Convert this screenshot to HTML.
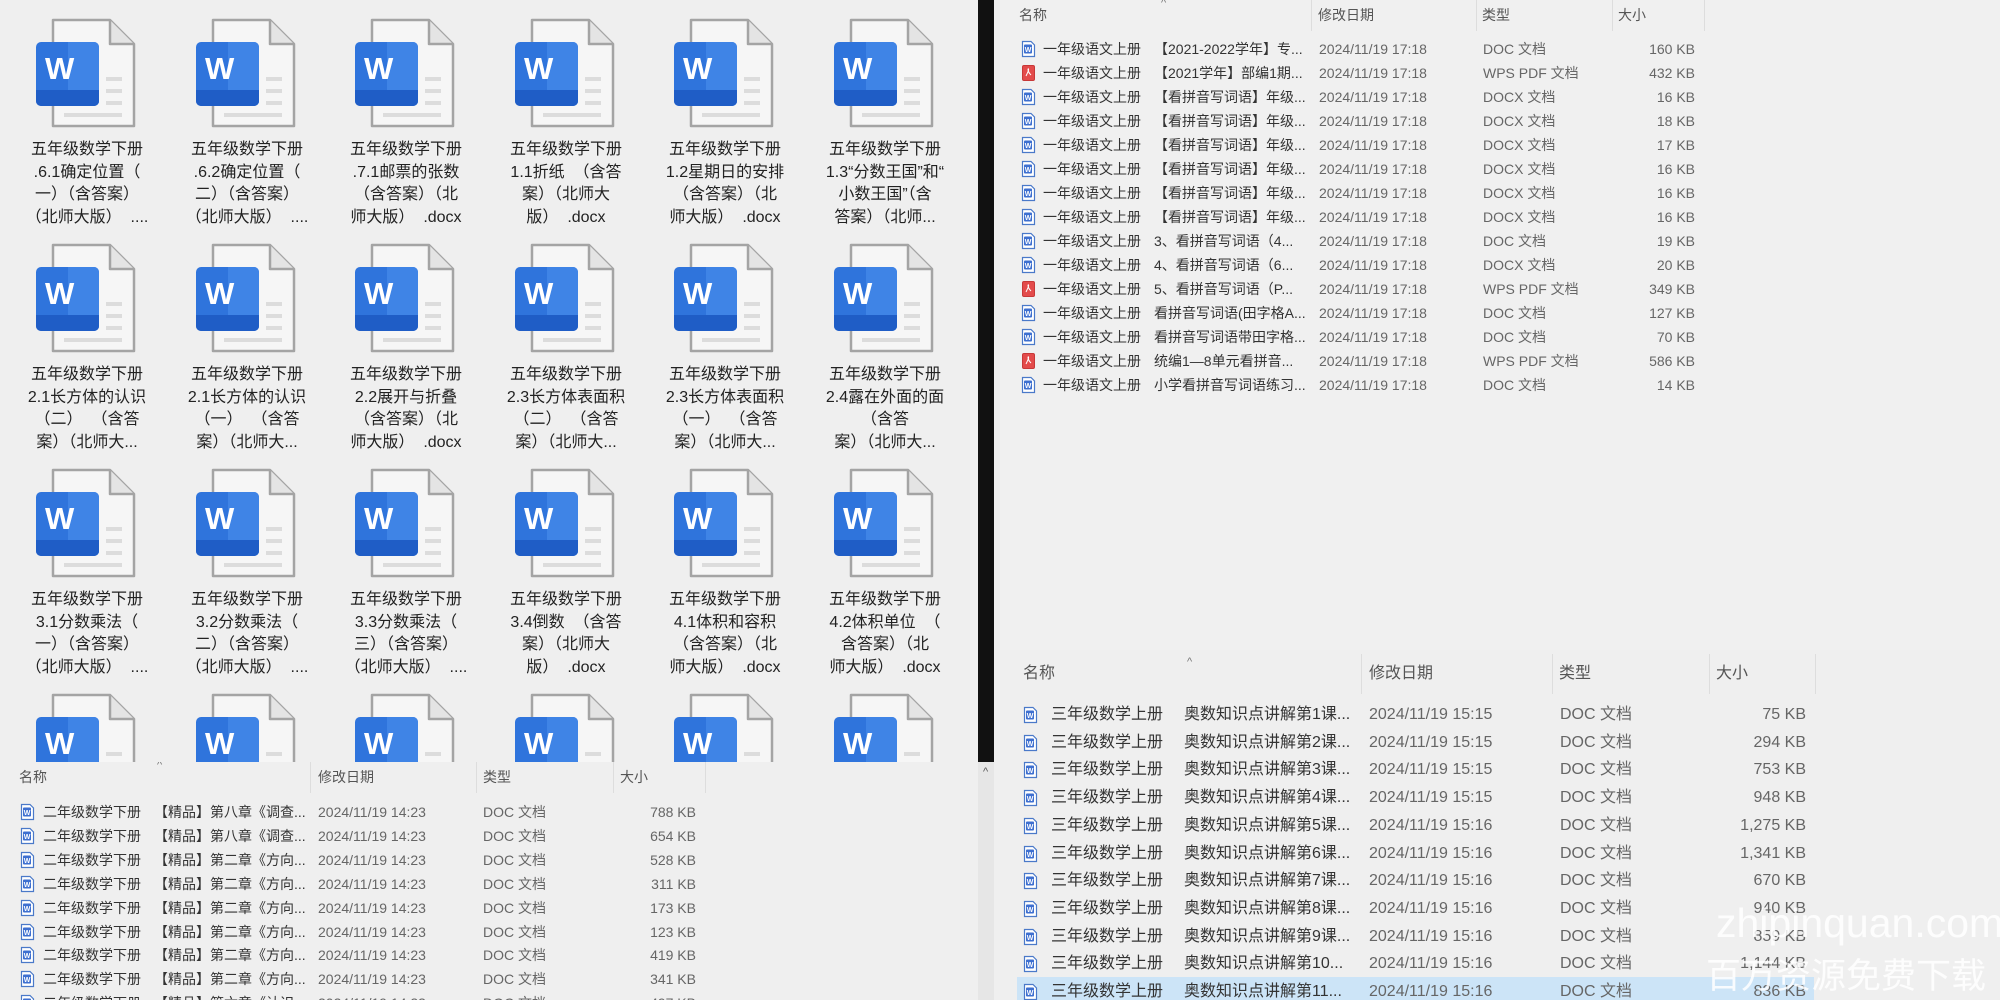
<!DOCTYPE html>
<html><head><meta charset="utf-8"><style>
*{margin:0;padding:0;box-sizing:border-box}
body{width:2000px;height:1000px;overflow:hidden;background:#efefef;font-family:"Liberation Sans","Noto Sans CJK SC",sans-serif;position:relative}
.a{position:absolute}
.it{position:absolute;width:160px;height:225px}
.pg{position:absolute;left:50px;top:18px;width:86px;height:111px}
.bw{position:absolute;left:36px;top:42px;width:63px;height:64px;border-radius:5px;overflow:hidden;background:#2f74dc}
.bw .r{position:absolute;left:32px;top:0;width:31px;height:64px;background:#3f84e6}
.bw .b{position:absolute;left:0;top:48px;width:63px;height:16px;background:#1f5dc6}
.bw span{position:absolute;left:9px;top:9px;color:#fff;font:bold 31px "Liberation Sans",sans-serif}
.tx{position:absolute;left:17px;top:139px;width:140px;text-align:center;font-size:16px;line-height:22.7px;color:#222;white-space:pre}
.h{position:absolute;font-size:14px;color:#555;line-height:20px}
.sep{position:absolute;width:1px;background:#ddd}
.row{position:absolute;font-size:14px;color:#333;white-space:nowrap;line-height:18px}
.row span{position:absolute;top:0;line-height:18px}
.g{color:#666}
.wm{position:absolute;color:rgba(255,255,255,.85);white-space:nowrap}
</style></head><body>

<div class="a" style="left:0;top:0;width:978px;height:762px;background:#efefef;overflow:hidden" id="grid"></div>

<div class="a" style="left:978px;top:0;width:16px;height:762px;background:#111"></div>
<div class="a" style="left:978px;top:762px;width:22px;height:238px;background:#e6e6e6"></div>
<div class="a" style="left:983px;top:766px;font-size:11px;color:#555">^</div>
<div class="a" style="left:994px;top:0;width:6px;height:762px;background:#efefef"></div>

<div class="a" style="left:0;top:762px;width:978px;height:238px;background:#efefef;overflow:hidden" id="bl"></div>
<div class="a" style="left:994px;top:0;width:1006px;height:650px;background:#f0f0f0;overflow:hidden" id="tr"></div>
<div class="a" style="left:994px;top:650px;width:1006px;height:350px;background:#efefef;overflow:hidden" id="br"></div>

<div class="wm" style="left:1716px;top:900px;font-size:41px;font-family:'Liberation Sans',sans-serif">zhipinquan.com</div>
<div class="wm" style="left:1706px;top:948px;font-size:35px">百万资源免费下载</div>

<script>
function icon(){return '<svg class="pg" viewBox="0 0 86 111"><path d="M3 2H60L84 26V108H3Z" fill="#f6f6f6" stroke="#a4a4a4" stroke-width="2.5" stroke-linejoin="round"/><path d="M60 2V26H84" fill="#e4e4e4" stroke="#a4a4a4" stroke-width="2.5" stroke-linejoin="round"/><g stroke="#dcdcdc" stroke-width="4"><line x1="56" y1="61" x2="72" y2="61"/><line x1="56" y1="73" x2="72" y2="73"/><line x1="56" y1="85" x2="72" y2="85"/><line x1="14" y1="97" x2="72" y2="97"/></g></svg><div class="bw"><div class="r"></div><div class="b"></div><span>W</span></div>';}
var T=[
["五年级数学下册\n.6.1确定位置（\n一）（含答案）\n（北师大版）  ....","五年级数学下册\n.6.2确定位置（\n二）（含答案）\n（北师大版）  ....","五年级数学下册\n.7.1邮票的张数\n（含答案）（北\n师大版）  .docx","五年级数学下册\n1.1折纸  （含答\n案）（北师大\n版）  .docx","五年级数学下册\n1.2星期日的安排\n（含答案）（北\n师大版）  .docx","五年级数学下册\n1.3“分数王国”和“\n小数王国”（含\n答案）（北师..."],
["五年级数学下册\n2.1长方体的认识\n（二）  （含答\n案）（北师大...","五年级数学下册\n2.1长方体的认识\n（一）  （含答\n案）（北师大...","五年级数学下册\n2.2展开与折叠\n（含答案）（北\n师大版）  .docx","五年级数学下册\n2.3长方体表面积\n（二）  （含答\n案）（北师大...","五年级数学下册\n2.3长方体表面积\n（一）  （含答\n案）（北师大...","五年级数学下册\n2.4露在外面的面\n（含答\n案）（北师大..."],
["五年级数学下册\n3.1分数乘法（\n一）（含答案）\n（北师大版）  ....","五年级数学下册\n3.2分数乘法（\n二）（含答案）\n（北师大版）  ....","五年级数学下册\n3.3分数乘法（\n三）（含答案）\n（北师大版）  ....","五年级数学下册\n3.4倒数  （含答\n案）（北师大\n版）  .docx","五年级数学下册\n4.1体积和容积\n（含答案）（北\n师大版）  .docx","五年级数学下册\n4.2体积单位  （\n含答案）（北\n师大版）  .docx"],
["","","","","",""]];
var h='';
for(var r=0;r<4;r++)for(var c=0;c<6;c++){h+='<div class="it" style="left:'+(Math.round(159.5*c))+'px;top:'+(r*225)+'px">'+icon()+'<div class="tx">'+T[r][c]+'</div></div>';}
document.getElementById('grid').innerHTML=h;

function di(){return '<svg width="15" height="18" viewBox="0 0 15 18" style="position:absolute;left:0;top:0"><path d="M1.5 1.5H10L13.5 5V16.5H1.5Z" fill="#fff" stroke="#4a79c9" stroke-width="1.2"/><rect x="3" y="4.5" width="8" height="9" rx="1" fill="#3d6fd0"/><text x="7" y="12" font-size="7" fill="#fff" text-anchor="middle" font-family="Liberation Sans" font-weight="bold">W</text></svg>';}
function pdf(){return '<svg width="15" height="18" viewBox="0 0 15 18" style="position:absolute;left:0;top:0"><rect x="1.5" y="1.5" width="12" height="15" rx="1.5" fill="#e34b4b" stroke="#c73838"/><path d="M5 12C7 8 8 6 7.5 5S6 7 10 11" stroke="#fff" fill="none" stroke-width="1"/></svg>';}
function list(el,o,W){var s='';
 o.heads.forEach(function(x){s+='<div class="h" style="left:'+x[1]+'px;top:'+o.hy+'px;font-size:'+o.fs+'px">'+x[0]+'</div>';});
 s+='<div class="h" style="left:'+o.caret+'px;top:'+(o.hy-12)+'px;font-size:11px;color:#777">^</div>';
 o.seps.forEach(function(x){s+='<div class="sep" style="left:'+x+'px;top:'+(o.hy-10)+'px;height:'+(o.fs*2+8)+'px"></div>';});
 o.rows.forEach(function(r,i){var y=o.ry+i*o.step;var lh=o.fs+6;
  if(r[5])s+='<div class="a" style="left:'+(o.ic-6)+'px;top:'+(y-4)+'px;width:'+(o.hl-o.ic+6)+'px;height:'+(o.step)+'px;background:#cce4f7"></div>';
  var st='line-height:'+lh+'px';
  s+='<div class="row" style="left:0;top:'+y+'px;font-size:'+o.fs+'px;width:100%;'+st+'">'+
  '<span style="left:'+o.ic+'px;top:'+((lh-18)/2)+'px;width:15px;height:18px">'+(r[4]=='p'?pdf():di())+'</span>'+
  '<span style="left:'+o.x[0]+'px;'+st+'">'+o.name+'</span><span style="left:'+o.x[1]+'px;'+st+'">'+r[0]+'</span>'+
  '<span class="g" style="left:'+o.x[2]+'px;'+st+'">'+r[1]+'</span><span class="g" style="left:'+o.x[3]+'px;'+st+'">'+r[2]+'</span>'+
  '<span class="g" style="right:'+(W-o.x[4])+'px;left:auto;'+st+'">'+r[3]+'</span></div>';});
 el.innerHTML=s;}

var d='2024/11/19 17:18';
list(document.getElementById('tr'),{hy:5,fs:14,caret:167,heads:[["名称",25],["修改日期",324],["类型",488],["大小",624]],seps:[317,482,618,710],
 ry:39,step:24,ic:27,name:'一年级语文上册',x:[49,160,325,489,701],hl:720,rows:[
 ["【2021-2022学年】专...",d,"DOC 文档","160 KB"],["【2021学年】部编1期...",d,"WPS PDF 文档","432 KB","p"],
 ["【看拼音写词语】年级...",d,"DOCX 文档","16 KB"],["【看拼音写词语】年级...",d,"DOCX 文档","18 KB"],
 ["【看拼音写词语】年级...",d,"DOCX 文档","17 KB"],["【看拼音写词语】年级...",d,"DOCX 文档","16 KB"],
 ["【看拼音写词语】年级...",d,"DOCX 文档","16 KB"],["【看拼音写词语】年级...",d,"DOCX 文档","16 KB"],
 ["3、看拼音写词语（4...",d,"DOC 文档","19 KB"],["4、看拼音写词语（6...",d,"DOCX 文档","20 KB"],
 ["5、看拼音写词语（P...",d,"WPS PDF 文档","349 KB","p"],["看拼音写词语(田字格A...",d,"DOC 文档","127 KB"],
 ["看拼音写词语带田字格...",d,"DOC 文档","70 KB"],["统编1—8单元看拼音...",d,"WPS PDF 文档","586 KB","p"],
 ["小学看拼音写词语练习...",d,"DOC 文档","14 KB"]]},1006);

var R=[];var sz=["75 KB","294 KB","753 KB","948 KB","1,275 KB","1,341 KB","670 KB","940 KB","859 KB","1,144 KB","836 KB"];
for(var i=0;i<11;i++){R.push(["奥数知识点讲解第"+(i+1)+"课...", "2024/11/19 15:"+(i<4?"15":"16"),"DOC 文档",sz[i],"",i==10]);}
R[9][0]="奥数知识点讲解第10...";R[10][0]="奥数知识点讲解第11...";
list(document.getElementById('br'),{hy:14,fs:16,caret:193,heads:[["名称",29],["修改日期",375],["类型",565],["大小",722]],seps:[367,558,715,821],
 ry:54,step:27.7,ic:29,name:'三年级数学上册',x:[57,190,375,566,812],hl:820,rows:R},1006);

var B=[];var s2=["788 KB","654 KB","528 KB","311 KB","173 KB","123 KB","419 KB","341 KB","497 KB"];
for(var i=0;i<9;i++)B.push([(i<2?"【精品】第八章《调查...":i==8?"【精品】第六章《认识...":"【精品】第二章《方向..."),"2024/11/19 14:23","DOC 文档",s2[i]]);
list(document.getElementById('bl'),{hy:5,fs:14,caret:157,heads:[["名称",19],["修改日期",318],["类型",483],["大小",620]],seps:[310,476,613,705],
 ry:40,step:23.9,ic:20,name:'二年级数学下册',x:[43,154,318,483,696],hl:700,rows:B},978);
</script>
</body></html>
